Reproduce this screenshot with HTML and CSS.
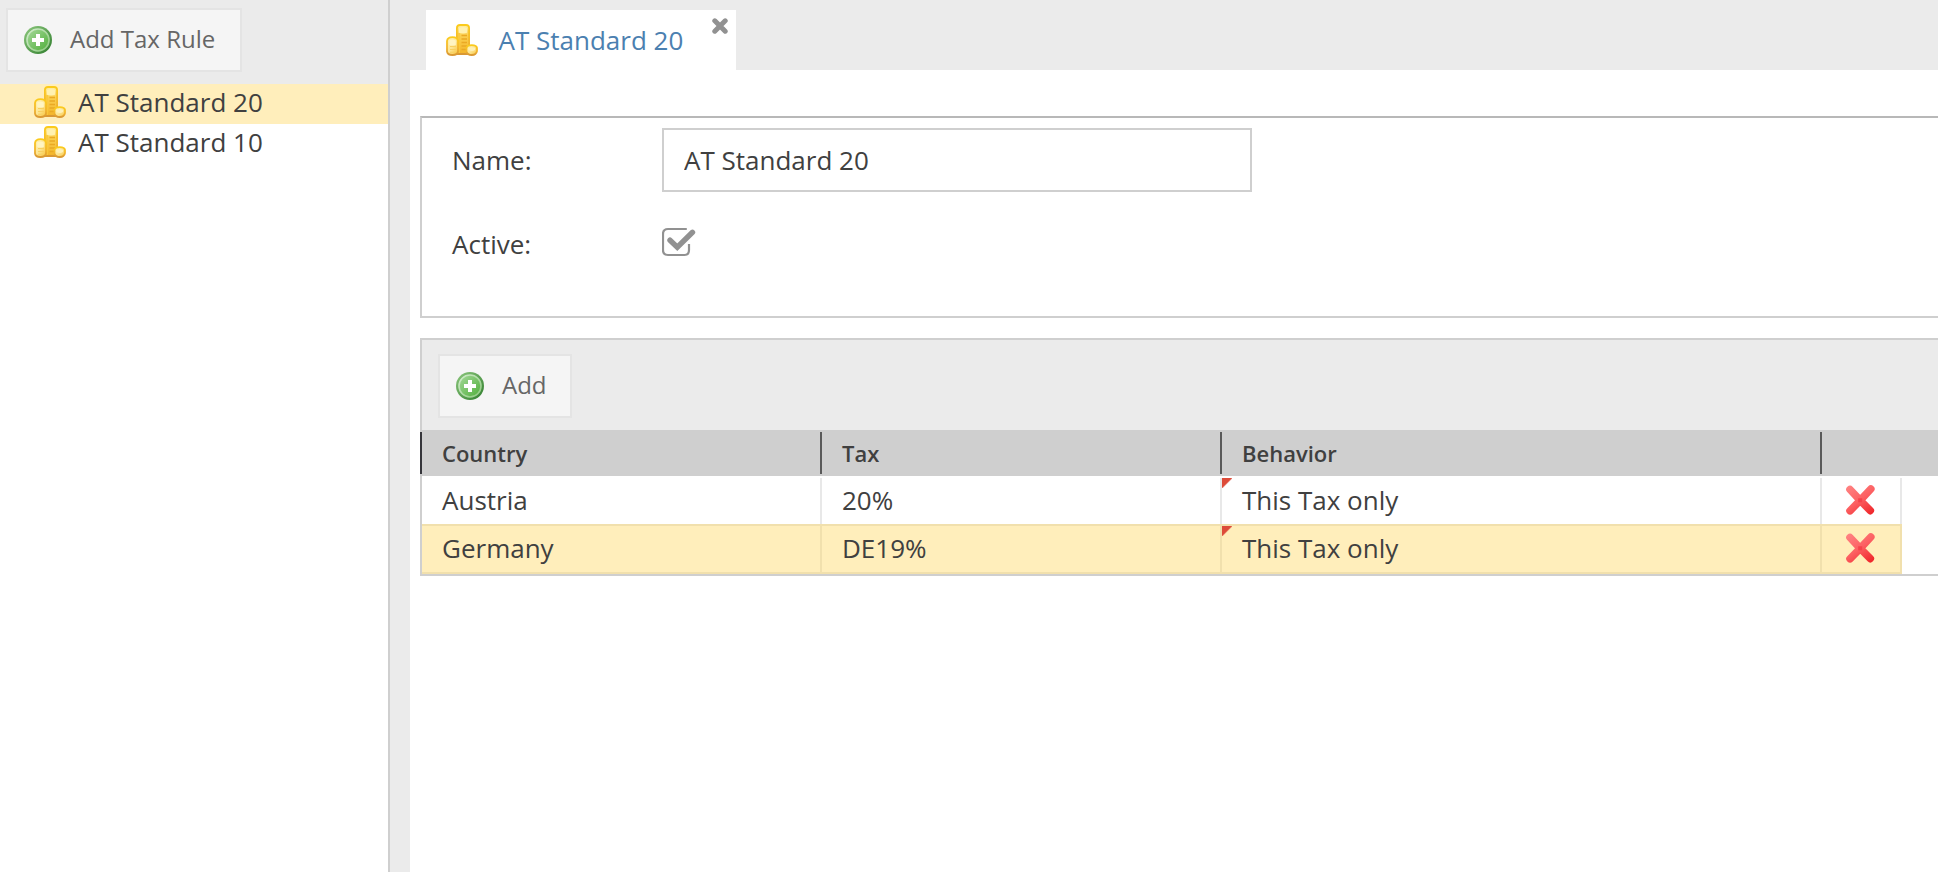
FILE: index.html
```html
<!DOCTYPE html>
<html lang="en">
<head>
<meta charset="utf-8">
<title>Tax Rules</title>
<link rel="stylesheet" href="styles.css">
</head>
<body>
<svg class="defs" width="0" height="0" aria-hidden="true">
  <defs>
    <linearGradient id="gold" x1="0" y1="0" x2="1" y2="1"><stop offset="0" stop-color="#fff3b8"/><stop offset=".5" stop-color="#fde694"/><stop offset="1" stop-color="#f9c53c"/></linearGradient>
    <linearGradient id="tower" x1="0" y1="0" x2="0" y2="1"><stop offset="0" stop-color="#fff0a8"/><stop offset=".35" stop-color="#fbd050"/><stop offset="1" stop-color="#f3b42a"/></linearGradient>
    <linearGradient id="rim" x1="0" y1="0" x2="0" y2="1"><stop offset="0" stop-color="#fbcb1c"/><stop offset=".6" stop-color="#f3b52e"/><stop offset="1" stop-color="#d99834"/></linearGradient>
    <linearGradient id="leaf" x1="0" y1="0" x2="1" y2="1"><stop offset="0" stop-color="#8dc87e"/><stop offset="1" stop-color="#2f7d2c"/></linearGradient>
    <linearGradient id="leafin" x1="0" y1="0" x2="1" y2="1"><stop offset="0" stop-color="#a5d99a"/><stop offset="1" stop-color="#4fae3a"/></linearGradient>
    <linearGradient id="ring" x1="0" y1="0" x2="1" y2="1"><stop offset="0" stop-color="#d5efcf"/><stop offset="1" stop-color="#8cc87e"/></linearGradient>
    <linearGradient id="red" gradientUnits="userSpaceOnUse" x1="6" y1="2" x2="26" y2="30"><stop offset="0" stop-color="#ff8080"/><stop offset=".5" stop-color="#fc6062"/><stop offset="1" stop-color="#f0292d"/></linearGradient>
    <symbol id="coins" viewBox="0 0 32 32">
      <path d="M10.900 4Q10.900 1 14 1h6q3.100 0 3.100 3V30H10.900z" fill="url(#tower)" stroke="url(#rim)" stroke-width="1.800"/>
      <path d="M13 3.800q4-1.800 8 0v5q-4 1.200-8 0z" fill="#fff1b0"/>
      <path d="M15.500 11.500h5.500M15.500 15h5.500M15.500 18.500h5.500M15.500 22h5.500M15.500 25.500h5.500" stroke="#eaa924" stroke-width="1.400"/>
      <path d="M13 9v20" stroke="#f9c93c" stroke-width="1.700"/>
      <path d="M1 17Q1.500 13.200 6.500 13.200T12 17V27.500q-.5 3.500-5.500 3.500T1 27.500z" fill="url(#gold)" stroke="url(#rim)" stroke-width="1.800"/>
      <path d="M3.200 16.500q3.300-2 6.600 0v4.500q-3.300 1.200-6.600 0z" fill="#fff4c2"/>
      <path d="M4 22.500h6M4 25.500h6M4 28.300h6" stroke="#f8d061" stroke-width="1.100"/>
      <path d="M20.500 24q.5-2.800 5.300-2.800T31 24v3q-.8 4-5.200 4T20.500 27.500z" fill="url(#gold)" stroke="url(#rim)" stroke-width="1.800"/>
      <path d="M22.500 24q3.300-1.600 6.500 0v2q-3 2-6.500 0z" fill="#fff1b8"/>
    </symbol>
    <symbol id="plus" viewBox="0 0 28 28">
      <circle cx="14" cy="14" r="14" fill="url(#leaf)"/>
      <circle cx="14" cy="14" r="11" fill="url(#leafin)" stroke="url(#ring)" stroke-width="1.600"/>
      <path d="M12 8h4v4h4v4h-4v4h-4v-4H8v-4h4z" fill="#fff"/>
    </symbol>
    <symbol id="delete" viewBox="0 0 32 32">
      <path d="M6 5.500 16.200 16.300 26.800 5M6 26.800 16.200 16.300 26.300 26.600" fill="none" stroke="url(#red)" stroke-width="7.600" stroke-linecap="round" stroke-linejoin="round"/>
      <path d="M14.200 14.300h4v4h-4z" fill="#f5434a"/>
    </symbol>
  </defs>
</svg>
<div class="app">
  <aside class="sidebar">
    <div class="side-toolbar">
      <button class="btn"><svg class="plus"><use href="#plus"/></svg><span class="btn-text">Add Tax Rule</span></button>
    </div>
    <ul class="tree">
      <li class="node selected"><svg class="coins"><use href="#coins"/></svg>AT Standard 20</li>
      <li class="node"><svg class="coins"><use href="#coins"/></svg>AT Standard 10</li>
    </ul>
  </aside>
  <main class="main">
    <div class="tabs">
      <div class="tab">
        <svg class="coins"><use href="#coins"/></svg>
        <span class="tab-title">AT Standard 20</span>
        <svg class="close" viewBox="0 0 16 16"><path d="M2.800 2.800l10.400 10.400M13.200 2.800L2.800 13.200" stroke="#919191" stroke-width="5" stroke-linecap="round"/></svg>
      </div>
    </div>
    <div class="content">
      <section class="form">
        <div class="field">
          <label class="label" for="name">Name:</label>
          <input class="input" id="name" type="text" value="AT Standard 20">
        </div>
        <div class="field">
          <span class="label">Active:</span>
          <svg class="check" viewBox="0 0 34 30"><path d="M24.800 2H6Q1 2 1 7v16q0 5 5 5h16.500q4.500 0 4.500-5v-6" fill="none" stroke="#919191" stroke-width="2.200"/><path d="M8 13.200l7.300 7L30.500 5.300" fill="none" stroke="#919191" stroke-width="5.400" stroke-linecap="round"/></svg>
        </div>
      </section>
      <section class="grid">
        <div class="grid-toolbar">
          <button class="btn btn-add"><svg class="plus"><use href="#plus"/></svg><span class="btn-text">Add</span></button>
        </div>
        <div class="head">
          <div class="th">Country</div><div class="th">Tax</div><div class="th">Behavior</div><div class="th"></div>
        </div>
        <div class="row">
          <div class="td">Austria</div><div class="td">20%</div><div class="td dirty">This Tax only</div><div class="td action"><svg class="delete"><use href="#delete"/></svg></div>
        </div>
        <div class="row current">
          <div class="td">Germany</div><div class="td">DE19%</div><div class="td dirty">This Tax only</div><div class="td action"><svg class="delete"><use href="#delete"/></svg></div>
        </div>
      </section>
    </div>
  </main>
</div>
</body>
</html>
```
FILE: styles.css
```css
* { box-sizing: border-box; }
body {
  margin: 0;
  overflow: hidden;
  background: #fff;
  color: #404040;
  font: 26px/40px "Open Sans", "Noto Sans", sans-serif;
}
svg { display: block; flex: none; }
.defs { position: absolute; }
.app { display: flex; height: 872px; background: #ebebeb; }

.sidebar { width: 390px; flex: none; background: #fff; border-right: 2px solid #cfcfcf; }
.side-toolbar { height: 84px; padding: 8px 6px; background: #ebebeb; }
.btn {
  display: flex;
  align-items: center;
  gap: 18px;
  width: 236px;
  height: 64px;
  padding: 0 0 0 16px;
  border: 2px solid #e4e4e4;
  background: #f5f5f5;
  color: #666;
  font: 24px/58px "Open Sans", "Noto Sans", sans-serif;
}
.btn-add { width: 134px; }
.btn-text { padding-bottom: 2px; white-space: nowrap; }
.plus { width: 28px; height: 28px; }
.coins { width: 32px; height: 32px; }
.tree { margin: 0; padding: 0; list-style: none; }
.node { display: flex; align-items: flex-start; gap: 12px; height: 40px; padding-left: 34px; line-height: 36px; }
.node.selected { background: #ffeebb; }
.node .coins { margin-top: 2px; }

.main { flex: 1; min-width: 0; display: flex; flex-direction: column; padding-left: 20px; }
.tabs { flex: none; display: flex; height: 70px; padding: 10px 0 0 16px; }
.tab { display: flex; width: 310px; height: 60px; padding-left: 20px; background: #fff; color: #4b80b0; }
.tab .coins { margin-top: 14px; }
.tab-title { flex: 1; margin-left: 20.5px; line-height: 60px; white-space: nowrap; }
.close { width: 16px; height: 16px; margin: 8px 8px 0 0; }

.content { flex: 1; padding: 46px 0 0 10px; background: #fff; }
.form {
  height: 202px;
  padding: 10px 0 0 30px;
  border: 2px solid #cfcfcf;
  border-top-color: #b8b8b8;
  border-right: 0;
}
.field { display: flex; height: 84px; }
.label { width: 210px; line-height: 64px; }
.input {
  width: 590px;
  height: 64px;
  padding: 0 20px;
  border: 2px solid #cfcfcf;
  background: #fff;
  color: #404040;
  font: inherit;
}
.check { width: 34px; height: 30px; margin-top: 15px; }

.grid { margin-top: 20px; border: 2px solid #cfcfcf; border-right: 0; }
.grid-toolbar { display: flex; height: 90px; padding: 14px 16px; background: #ebebeb; }
.head, .row { display: grid; grid-template-columns: 400px 400px 600px 80px; }
.head {
  height: 46px;
  margin-left: -2px;
  padding: 2px 0;
  background: #cfcfcf;
  font-size: 22px;
  font-weight: 600;
  line-height: 42px;
}
.th { padding-left: 20px; border-left: 2px solid #5a5a5a; }
.th:first-child { border-left-color: #36363b; }
.row { width: 1480px; height: 48px; padding-top: 2px; }
.row.current { height: 50px; padding: 0; border: solid #f1e0ad; border-width: 2px 0; background: #ffeebb; }
.td { height: 46px; padding-left: 20px; border-right: 2px solid #e8e8e8; line-height: 45px; }
.current .td { border-color: #f1e0ad; }
.dirty { background: linear-gradient(135deg, #dd4b39 0 6.800px, transparent 8px) no-repeat 0 0 / 10px 10px; }
.action { padding: 6px 0 0 22px; }
.delete { width: 32px; height: 32px; }
```
